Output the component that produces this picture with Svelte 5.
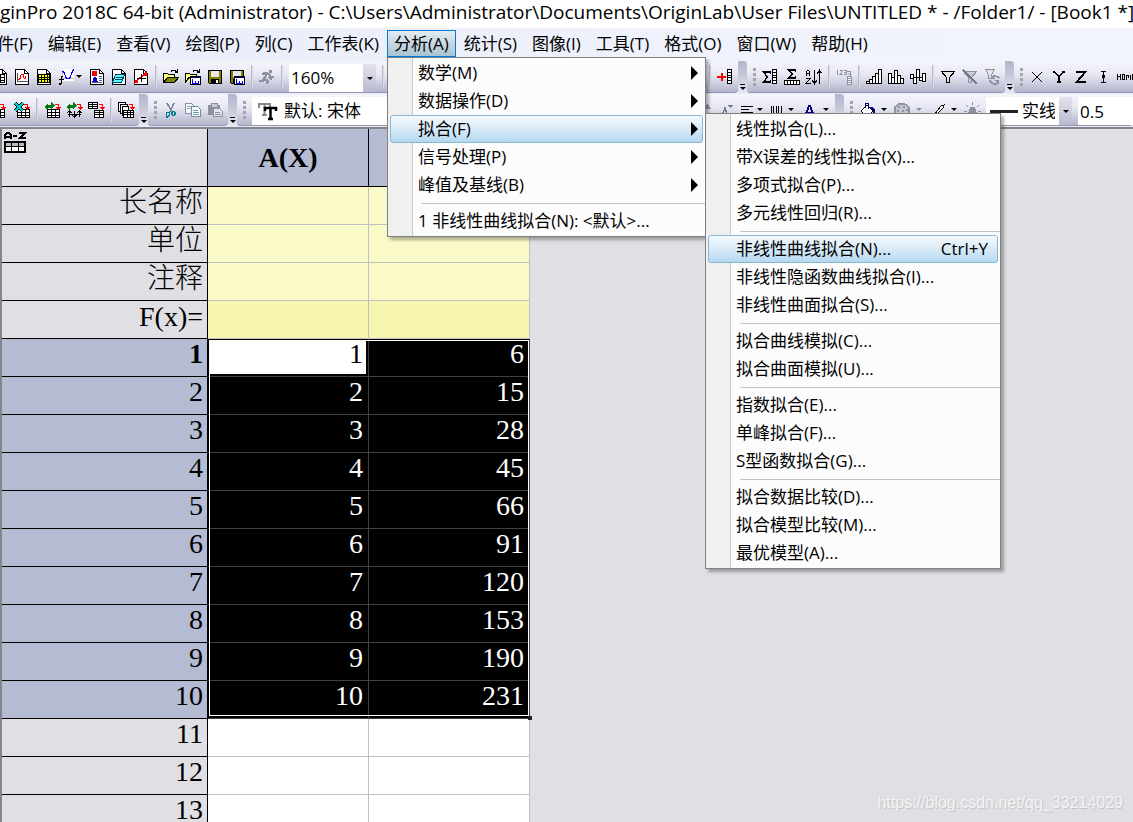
<script>
  const menus = ['件(F)', '编辑(E)', '查看(V)', '绘图(P)', '列(C)', '工作表(K)', '分析(A)', '统计(S)', '图像(I)', '工具(T)', '格式(O)', '窗口(W)', '帮助(H)'];

  const analysis = [
    { t: '数学(M)', sub: true },
    { t: '数据操作(D)', sub: true },
    { t: '拟合(F)', sub: true, on: true },
    { t: '信号处理(P)', sub: true },
    { t: '峰值及基线(B)', sub: true },
    null,
    { t: '1 非线性曲线拟合(N): <默认>...' }
  ];
  const fitting = [
    { t: '线性拟合(L)...' },
    { t: '带X误差的线性拟合(X)...' },
    { t: '多项式拟合(P)...' },
    { t: '多元线性回归(R)...' },
    null,
    { t: '非线性曲线拟合(N)...', key: 'Ctrl+Y', on: true },
    { t: '非线性隐函数曲线拟合(I)...' },
    { t: '非线性曲面拟合(S)...' },
    null,
    { t: '拟合曲线模拟(C)...' },
    { t: '拟合曲面模拟(U)...' },
    null,
    { t: '指数拟合(E)...' },
    { t: '单峰拟合(F)...' },
    { t: 'S型函数拟合(G)...' },
    null,
    { t: '拟合数据比较(D)...' },
    { t: '拟合模型比较(M)...' },
    { t: '最优模型(A)...' }
  ];

  const labels = ['长名称', '单位', '注释', 'F(x)='];
  const data = [6, 15, 28, 45, 66, 91, 120, 153, 190, 231];
  const empty = [11, 12, 13];

  const K = 'fill="none" stroke="#000"';
  const doc = '<path d="M1.5 .5h9l4 4v11h-13z" fill="#fff" stroke="#000"/><path d="M10.5 .5v4h4" fill="none" stroke="#000"/>';
  // small table: outline, one header line, one body line and two column lines
  const grid = (x, y) => `<path d="M${x}.5 ${y}.5h12v8h-12z" fill="#fff" stroke="#000"/><path d="M${x} ${y + 3}.5h12M${x} ${y + 6}.5h12M${x + 4}.5 ${y}v8M${x + 8}.5 ${y}v8" ${K}/>`;
  const redArrow = (x, y) => `<path d="M${x} ${y}.5h3.5v4" fill="none" stroke="#f00" stroke-width="1.4"/><path d="M${x + 1} ${y + 3}h5l-2.500 3.500z" fill="#f00"/>`;
  const green = '<path d="M0 5l4-4v2h3v3h-3v2zM11 3l-4 4v-2h-2v-2h2v-3z" fill="#007a10"/>';
  const folder = '<path d="M.5 13.5v-9h4l1 1h6v3" fill="#ffff80" stroke="#000"/>';
  const curl = `<path d="M8 2.500q3-3 6 1M14.500 0v3.500h-3" ${K}/>`;
  const win = '<path d="M5.500 7.500h10v8h-10z" fill="#fff" stroke="#000"/><path d="M6 8h9v1h-9z" fill="#000080"/><path d="M7.500 10v4h6v-2M10.500 12v2" fill="none" stroke="#00f"/>';
  const floppy = '<path d="M1.500 1.500h13v13h-12l-1-1z" fill="#808000" stroke="#000"/><path d="M4 2h8v6h-8z" fill="#e8e8e8"/><path d="M4 10h8v5h-8z" fill="#000"/><path d="M9 11h2v3h-2z" fill="#fff"/>';
  const column = '<path d="M10.500 .5h4v14h-4z" fill="#fff" stroke="#000"/><path d="M10 3.500h4M10 6.500h4M10 8.500h4M10 11.500h4" fill="none" stroke="#000"/>';
  const funnel = (c, f) => `<path d="M1.500 2.500h13l-5 6v5h-3v-5z" fill="${f}" stroke="${c}" stroke-width="1.200"/>`;

  const icons = {
    book: `<path d="M5 .5h5.500l4 4v11h-10" fill="#fff" stroke="#000"/><path d="M10.500 .5v4h4" ${K}/><path d="M0 5.500h12.500v8h-12.500" fill="#fff" stroke="#000"/><path d="M0 8.500h12M0 11.500h12M8.500 6v8" ${K}/>`,
    graph: doc + '<path d="M3.500 4v8.500h10" fill="none" stroke="#555"/><path d="M4 11l2-1 1-4 2-1 1 4 1 1 1-3" fill="none" stroke="#f00" stroke-width="1.200"/>',
    matrix: doc + '<path d="M2.500 5.500h11v8h-11z" fill="#ff0" stroke="#000"/><path d="M2 8.500h12M2 10.500h12M5.500 5v9M8.500 5v9M11.500 5v9" fill="none" stroke="#000"/>',
    func: '<path d="M4 0h12v12h-12z" fill="#fff"/><path d="M4.500 1v10M4 9.500h12" stroke="#bbb"/><path d="M4 2q2 0 3 4t3 4 3-4 3-6" fill="none" stroke="#00f" stroke-width="1.200"/><path d="M5 7.500h-1.500v6l-1 1.500h-2M1 10.500h5" fill="none" stroke="#000" stroke-width="1.600"/>',
    layout: doc + '<path d="M3 2h5v5h-5z" fill="#f00"/><path d="M3 13l2-5h2l2 5z" fill="#00c"/><path d="M10 7.500h3M10 9.500h3M10 11.500h3M3 13.500h10" stroke="#558"/>',
    notes: doc + '<path d="M4.500 5.500h9l-3 8h-9z" fill="#5ff" stroke="#046"/><path d="M5 8.500h7M4 10.500h7" stroke="#046"/>',
    digit: doc + '<path d="M1 14l6-5 7-6" stroke="#f00" stroke-width="1.500"/><path d="M8.500 5v8M4 9.500h9" stroke="#000"/><path d="M2 11h3v3h-3zM11 4h3v3h-3z" fill="#f00"/>',
    open: folder + '<path d="M.5 13.500l4-5h11l-4 5z" fill="#808000" stroke="#000"/>' + curl,
    open2: folder + '<path d="M1 13l3-5h4" fill="#808000" stroke="#000"/>' + win + curl,
    save: floppy,
    saveAs: floppy + win,
    run: '<path d="M10 1h3v3h-3z" fill="#8f91a0"/><path d="M3 5l4-1 3 1 2 3h3M8 5l-3 5 4 2-1 3M6 10l-2 2h-4M10 8l3 3" fill="none" stroke="#8f91a0" stroke-width="2.400"/>',
    addCol: '<path d="M0 8h9M4.500 4v8" stroke="#f00" stroke-width="2"/>' + column,
    stat: '<path d="M8.500 5v-2h-7l4 5-4 5h7v-2" fill="none" stroke="#000" stroke-width="1.400"/>' + column,
    statRow: '<path d="M11.500 3v-2h-7l4 4-4 4h7v-2" fill="none" stroke="#000" stroke-width="1.400"/><path d="M.5 11.500h15v4h-15z" fill="#fff" stroke="#000"/><path d="M3.500 12v4M6.500 12v4M9.500 12v4M12.500 12v4" stroke="#000"/>',
    sort: `<path d="M.5 7v-4l1-2h1l1 2v4M1 4.500h3M0 9.500h4l-4 5h5" ${K}/><path d="M8.500 1v13M6 11.500l2.500 3 2-3M13.500 15v-13M11 4.500l2.500-3 2 3" ${K} stroke-width="1.300"/>`,
    rank: '<path d="M1.500 1v5M4 1.500h2.500l-2.500 4h3M8 1.500h2v4h-2M8 3.500h2M11 2.500h3v4M12 4l2 2" fill="none" stroke="#8f91a0"/><path d="M11.500 7.500h4v8h-4z" fill="#fff" stroke="#8f91a0"/><path d="M11 9.500h4M11 11.500h4M11 13.500h4" stroke="#8f91a0"/>',
    bars1: '<path d="M.5 12.500h3v2h-3zM3.500 10.500h3v4h-3zM6.500 7.500h3v7h-3zM9.500 4.500h3v10h-3zM12.500 .5h3v14h-3z" fill="#fff" stroke="#000"/>',
    bars2: '<path d="M.5 4.500h3v10h-3zM3.500 8.500h3v6h-3zM6.500 1.500h3v13h-3zM9.500 6.500h3v8h-3zM12.500 9.500h3v5h-3z" fill="#fff" stroke="#000"/>',
    bars3: '<path d="M.5 5.500h3v4h-3zM3.500 8.500h3v6h-3zM6.500 .5h3v8h-3zM9.500 8.500h3v3h-3zM12.500 4.500h3v8h-3z" fill="#fff" stroke="#000"/>',
    filter: funnel('#000', '#e4e4e4'),
    filterOff: funnel('#8f91a0', '#ccd') + '<path d="M1 1l14 14" stroke="#777a8c" stroke-width="2"/>',
    filterRe: '<path d="M1.500 .5h9l-3 5v4h-3v-4z" fill="#e4e4ee" stroke="#8f91a0"/><path d="M15 9a5 4 0 0 0-7-1M6 11a5 4 0 0 0 8 3" fill="none" stroke="#8f91a0" stroke-width="2"/><path d="M7 5v5h4zM15 16v-5h-5z" fill="#8f91a0"/>',
    x: '<path d="M3 3l10 10M13 3l-10 10" stroke="#000" stroke-width="1.400"/>',
    y: '<path d="M2 3h2l4 5v5M14 3h-2l-4 5M6 13h4" fill="none" stroke="#000" stroke-width="1.400"/>',
    z: '<path d="M3 3h9.500l-9 10h9.500" fill="none" stroke="#000" stroke-width="1.800"/>',
    err: '<path d="M6 2.500h5M8.500 2v11M6 13.500h5" stroke="#000"/><path d="M7 6h3v3h-3z" fill="#000"/>',
    home: '<path d="M.5 11v-6M.5 7.500h2M3.500 11v-6M5.500 5.500h2v5h-2zM9.500 11v-5.500M10 6.500h2M11.500 6v3M13.500 11v-5.500M17 5.500h-1.500v5h2M15 8h2" fill="none" stroke="#000"/>',
    impA: grid(0, 7) + redArrow(8, 2),
    excel: grid(3, 7) + '<path d="M1 1l8 8M9 1l-8 8" stroke="#000" stroke-width="3"/><path d="M1 1l8 8M9 1l-8 8" stroke="#0cc" stroke-width="1.500"/>' + redArrow(10, 2),
    recalc: green + grid(3, 7) + redArrow(11, 2),
    recalc2: green + `<path d="M3.500 9v6M1 11l2.500-2 2 2M8.500 9v6M6 13l2.500 2 2-2M13.500 9v6M11 11l2.500-2 2 2M2 12.500h13" ${K}/>` + redArrow(11, 2),
    copyTab: '<path d="M.5 .5h9v6h-9z" fill="#fff" stroke="#000"/><path d="M0 2.500h9M0 4.500h9M4.500 1v6" stroke="#000"/><path d="M6.500 8.500h9v7h-9z" fill="#fff" stroke="#000"/><path d="M7 10.500h9M7 12.500h9M11.500 9v7" stroke="#000"/>' + redArrow(11, 2),
    batch: '<path d="M.5 .5h7v9h-7z" fill="#fff" stroke="#000"/><path d="M2.500 2.500h7v9h-7z" fill="#fff" stroke="#000"/><path d="M4.500 4.500h6v9h-6z" fill="#fff" stroke="#000"/><path d="M5.500 8.500h10v7h-10z" fill="#fff" stroke="#000"/><path d="M6 10.500h10M6 12.500h10M9.500 9v7M12.500 9v7" stroke="#000"/>' + redArrow(11, 2),
    cut: '<path d="M4 1l5 9M11 1l-4 9" stroke="#789" stroke-width="1.600"/><path d="M3.500 10.500h3v3l-2 1.500h-1zM9.500 9.500h2l1 3-2 1-2-1z" fill="none" stroke="#067a90" stroke-width="1.400"/>',
    copy: '<path d="M.5 1.500h6l3 3v7h-9z" fill="#f6f6fa" stroke="#8f91a0"/><path d="M2 4.500h4M2 6.500h5" stroke="#9aa"/><path d="M6.500 4.500h6l3 3v7h-9z" fill="#fff" stroke="#68909a"/><path d="M8 8.500h5M8 10.500h6M8 12.500h6" stroke="#68a0a8"/>',
    paste: '<path d="M1 3h12v10h-12z" fill="#8f91a0"/><path d="M4 1h6v4h-6z" fill="#c8cad6" stroke="#8f91a0"/><path d="M6.500 6.500h6l3 3v5h-9z" fill="#e4e4ee" stroke="#8f91a0"/><path d="M8 10.500h5M8 12.500h6" stroke="#8f91a0"/>',
    fontUp: '<path d="M1 14l4-9 4 9M3 11h5M10 6l2.500-3 2.500 3z" fill="#8f91a0" stroke="#8f91a0"/>',
    fontDn: '<path d="M4 15l4-9 3 9M5 11.500h5" fill="none" stroke="#777a8c" stroke-width="1.400"/><path d="M10 3h6l-3 3z" fill="#777a8c"/>',
    align: '<path d="M2 4.500h12M2 7.500h8M2 10.500h12M2 13.500h8" stroke="#000" stroke-width="1.300"/>',
    vbars: '<path d="M1.500 4v9M3.500 4v7M6.500 4v9M8.500 4v7M11.500 4v9" stroke="#000"/>',
    fontA: '<path d="M4 14l4-10h1l4 10M6 10.500h6M2 14h4M11 14h4" fill="none" stroke="#000080" stroke-width="2"/>',
    bucket: '<path d="M2 9l6-6 6 6-6 6z" fill="#fff" stroke="#000"/><path d="M6 6v-5h3v6" fill="none" stroke="#000080"/><path d="M10 5h4l2 3v6h-2v-5z" fill="#000080"/>',
    palette: '<path d="M1 5l4-3h6l4 3v6l-4 3h-6l-4-3z" fill="#c4c6d2" stroke="#8f91a0" stroke-width="1.400"/><path d="M4 4h2v2h-2zM9 4h2v2h-2zM3 8h2v2h-2zM8 8h2v2h-2zM12 7h2v2h-2z" fill="#8f91a0"/>',
    pen: '<path d="M5 13l7-9 3-1-1 3-7 7z" fill="#fff" stroke="#000"/><path d="M0 14h4" stroke="#000" stroke-width="1.500"/>',
    lamp: '<path d="M6 5h5l2 7v3h-9v-3z" fill="#8f91a0"/><path d="M8.500 0v3M2 3l2 2M15 3l-2 2M0 9h3M14 9h3" stroke="#8f91a0"/>'
  };
</script>

{#snippet icon(n)}
  <button class="ic" aria-label={n}><svg width="16" height="16" viewBox="0 0 16 16" shape-rendering="crispEdges">{@html icons[n]}</svg></button>
{/snippet}
{#snippet drop(n, wide, dim)}
  <button class="ic drop" class:wide class:dim aria-label={n}><svg width="16" height="16" viewBox="0 0 16 16" shape-rendering="crispEdges">{@html icons[n]}</svg><i class="tri"></i></button>
{/snippet}
{#snippet popup(items)}
  {#each items as it}
    {#if it}
      <button class="item" class:on={it.on} role="menuitem"><span>{it.t}</span>{#if it.key}<kbd>{it.key}</kbd>{/if}{#if it.sub}<i class="more"></i>{/if}</button>
    {:else}
      <div class="rule"></div>
    {/if}
  {/each}
{/snippet}

<div class="app">
  <header class="title">ginPro 2018C 64-bit (Administrator) - C:\Users\Administrator\Documents\OriginLab\User Files\UNTITLED * - /Folder1/ - [Book1 *]</header>

  <nav class="menubar">
    {#each menus as m}
      <button class:open={m === '分析(A)'}>{m}</button>
    {/each}
  </nav>

  <div class="row">
    <div class="bar first">
      {@render icon('book')}{@render icon('graph')}{@render icon('matrix')}{@render drop('func')}
      {@render icon('layout')}{@render icon('notes')}{@render icon('digit')}
      <i class="sep"></i>
      {@render icon('open')}{@render icon('open2')}{@render icon('save')}{@render icon('saveAs')}
      <i class="sep"></i>
      {@render icon('run')}
      <i class="sep"></i>
      <div class="combo zoom"><select aria-label="zoom"><option>160%</option></select><i class="btn"><i class="tri"></i></i></div>
      <i class="sep"></i>
      <i class="fill one"></i>
      <i class="sep"></i>
      {@render icon('addCol')}
    </div>
    <i class="cap"></i>
    <div class="bar">
      <i class="grip"></i>
      {@render icon('stat')}{@render icon('statRow')}{@render icon('sort')}
      <i class="sep"></i>
      {@render icon('rank')}
      <i class="sep"></i>
      {@render icon('bars1')}{@render icon('bars2')}{@render icon('bars3')}
      <i class="sep"></i>
      {@render icon('filter')}{@render icon('filterOff')}{@render icon('filterRe')}
    </div>
    <i class="cap"></i>
    <div class="bar last">
      <i class="grip"></i>
      {@render icon('x')}{@render icon('y')}{@render icon('z')}{@render icon('err')}{@render icon('home')}
    </div>
  </div>

  <div class="row">
    <div class="bar first">
      {@render icon('impA')}{@render icon('excel')}
      <i class="sep"></i>
      {@render icon('recalc')}{@render icon('recalc2')}{@render icon('copyTab')}
      <i class="sep"></i>
      {@render icon('batch')}
    </div>
    <i class="cap"></i>
    <div class="bar">
      <i class="grip"></i>
      {@render icon('cut')}{@render icon('copy')}{@render icon('paste')}
    </div>
    <i class="cap"></i>
    <div class="bar">
      <i class="grip"></i>
      <div class="combo font">
        <svg width="20" height="20" viewBox="0 0 20 20"><path d="M1 7V3h11v4M6.500 3v11M4 14h5" fill="none" stroke="#888" stroke-width="2"/><path d="M7 10V7h11v3M12.500 7v11M10 18h5" fill="none" stroke="#000" stroke-width="2.500"/></svg>
        <select aria-label="font"><option>默认: 宋体</option></select>
      </div>
      <i class="fill two"></i>
      {@render icon('fontUp')}{@render icon('fontDn')}{@render drop('align')}{@render drop('vbars')}{@render drop('fontA', true)}
    </div>
    <i class="cap"></i>
    <div class="bar last">
      <i class="grip"></i>
      {@render drop('bucket', true)}{@render drop('palette', true, true)}{@render drop('pen', true)}{@render icon('lamp')}
      <div class="combo line"><i class="stroke"></i><select aria-label="line"><option>实线</option></select><i class="btn"><i class="tri"></i></i></div>
      <input class="width" aria-label="width" value="0.5" />
    </div>
  </div>

  <main class="sheet">
    <div class="grid">
      <table>
        <colgroup><col class="head" /><col /><col /></colgroup>
        <thead>
          <tr>
            <th class="corner"><svg width="23" height="23" viewBox="0 0 23 23" shape-rendering="crispEdges"><path d="M1 8V4l2-2h2l2 2v4M1 5.500h6M9 5h4M15 2h6l-5 5h6" fill="none" stroke="#000" stroke-width="2"/><path d="M1 11h20v10H1z" fill="#fff" stroke="#000" stroke-width="2"/><path d="M2 12h18v3H2z" fill="#b8bcb8"/><path d="M1 15.500h20M7.500 11v10M14.500 11v10" stroke="#000" stroke-width="1.500"/></svg></th>
            <th class="col">A(X)</th>
            <th class="col"></th>
          </tr>
        </thead>
        <tbody>
          {#each labels as l, i}
            <tr class="meta" class:fx={i === 3}><th>{l}</th><td></td><td></td></tr>
          {/each}
          {#each data as d, i}
            <tr class="sel"><th class:strong={i === 0}>{i + 1}</th><td class:active={i === 0}>{i + 1}</td><td>{d}</td></tr>
          {/each}
          {#each empty as n}
            <tr><th>{n}</th><td></td><td></td></tr>
          {/each}
        </tbody>
      </table>
      <div class="frame"></div>
      <div class="handle"></div>
    </div>
    <div class="mark">https://blog.csdn.net/qq_33214029</div>
  </main>

  <div class="menu m1" role="menu">{@render popup(analysis)}</div>
  <div class="menu m2" role="menu">{@render popup(fitting)}</div>
</div>

<style>
  .app, .app :global(*) { box-sizing: border-box; }
  .app {
    position: relative;
    display: flex;
    flex-direction: column;
    height: 100vh;
    overflow: hidden;
    background: #e8e9f6;
    color: #000;
    font: 17px/24px "Open Sans", "Noto Sans CJK SC", sans-serif;
  }
  button, select, input { font: inherit; color: inherit; border: 0; background: none; padding: 0; margin: 0; }
  i { display: block; flex: none; }

  .title { height: 28px; line-height: 24px; font-size: 19px; background: #fff; white-space: nowrap; overflow: hidden; flex: none; }
  .menubar { display: flex; gap: 1px; height: 33px; padding-top: 2px; background: linear-gradient(90deg, #e9edfa, #f3f5fd); flex: none; overflow: hidden; }
  .menubar button { flex: none; height: 27px; padding: 0 7px; white-space: nowrap; }
  .menubar button:first-child { padding-left: 0; margin-left: -3px; }
  .menubar .open { background: linear-gradient(#e4ecf2, #a8c3d2); border: 1px solid #0078d7; padding: 0 6px; }

  .row { display: flex; flex: none; height: 33px; padding-bottom: 1px; overflow: hidden; }
  .bar {
    display: flex;
    flex: none;
    align-items: center;
    gap: 6px;
    padding: 0 5px 0 6px;
    background: linear-gradient(#f5f6fc, #e6e7f2 45%, #b4b4cb);
    border-bottom: 1px solid #9695b2;
    border-radius: 0 0 4px 3px;
  }
  .bar.first { padding-left: 0; margin-left: -8px; }
  .bar.last { flex: 1 0 auto; }
  .ic { display: flex; flex: none; align-items: center; width: 16px; height: 24px; }
  .ic svg { flex: none; overflow: visible; }
  .drop { width: 25px; gap: 1px; }
  .drop.wide { width: 29px; gap: 5px; }
  .tri { width: 0; height: 0; border: 4px solid transparent; border-top-color: #000; border-bottom: 0; }
  .drop .tri { border-width: 3px 3px 0; margin-left: 1px; }
  .dim .tri { border-top-color: #8f91a0; }
  .sep { width: 2px; height: 24px; border-left: 1px solid #b9b9c9; border-right: 1px solid #dcdce6; }
  .grip { width: 3px; height: 18px; background: repeating-linear-gradient(#a2a2ae 0 3px, transparent 3px 5px); }
  .cap { position: relative; width: 9px; height: 32px; background: linear-gradient(#b2b2cc, #cfcfe0 60%, #e8e9f6); border-radius: 0 4px 0 0; }
  .cap::before { content: ""; position: absolute; left: 2px; top: 23px; width: 5px; height: 1px; background: #000; }
  .cap::after { content: ""; position: absolute; left: 2px; top: 26px; border: 3px solid transparent; border-top-color: #000; border-bottom: 0; }
  .fill.one { width: 313px; }
  .fill.two { width: 231px; }

  .combo { display: flex; align-items: center; align-self: flex-end; flex: none; height: 28px; background: #fff; }
  .combo select { appearance: none; flex: 1; min-width: 0; outline: 0; }
  .combo .btn { display: flex; align-items: center; justify-content: center; width: 13px; height: 28px; background: linear-gradient(#e3e3ee, #b9b9cf); }
  .combo .btn .tri { border-width: 3px 3px 0; }
  .zoom { width: 87px; padding-left: 2px; }
  .font { width: 200px; padding-left: 6px; gap: 6px; }
  .line { width: 86px; padding-left: 4px; gap: 4px; }
  .stroke { width: 28px; height: 3px; background: #222; }
  .width { flex: 1; align-self: flex-end; width: 50px; height: 28px; background: #fff; padding-left: 2px; margin-right: -5px; }

  .sheet { position: relative; flex: 1; min-height: 0; overflow: hidden; background: #e0dfe4; border-top: 2px solid #84848c; border-left: 2px solid #84848c; }
  .grid { position: relative; width: max-content; }
  table { width: 528px; table-layout: fixed; border-spacing: 0; font: 28px/29px "Liberation Serif", "Noto Sans CJK SC", serif; }
  .head { width: 206px; }
  th, td { height: 38px; padding: 0 5px 0 0; text-align: right; vertical-align: top; border: 0 solid #c0c0c0; border-width: 0 1px 1px 0; }
  td { background: #fff; }
  th { font-weight: 300; border-color: #000; background: #e0dfe4; padding-right: 4px; }
  thead th { height: 58px; }
  .corner { text-align: left; padding: 2px; line-height: 0; }
  .col { background: #b5bbd3; font-weight: 700; text-align: center; vertical-align: middle; padding: 0; }
  .meta th { line-height: 31px; }
  .meta td { background: #fafac8; }
  .fx td { background: #f6f6b0; }
  .sel th { background: #b5bbd3; }
  .sel .strong { font-weight: 700; }
  .sel td { background: #000; color: #fff; border-color: #404040; }
  .sel td.active { background: #fff; color: #000; box-shadow: inset 1px 1px #000, inset -2px -2px #000; }
  .frame { position: absolute; left: 207px; right: 1px; top: 211px; height: 376px; border: 1px solid #fff; }
  .handle { position: absolute; right: -2px; top: 587px; width: 4px; height: 4px; background: #222; }
  .mark { position: absolute; right: 10px; bottom: 7px; font: 16px/24px "Liberation Sans", sans-serif; color: #f4f4f6; text-shadow: 1px 1px 1px #c0c0c4; }

  .menu {
    position: absolute;
    padding: 1px 0;
    border: 1px solid #808080;
    background: linear-gradient(90deg, #f0f0f0 24px, #c8c8c8 24px 25px, #fcfcfc 25px);
    box-shadow: 3px 3px 3px rgba(0, 0, 0, 0.3);
  }
  .m1 { left: 387px; top: 57px; width: 319px; }
  .m2 { left: 705px; top: 113px; width: 296px; }
  .item { display: flex; align-items: center; width: calc(100% - 4px); height: 28px; margin-left: 2px; padding: 0 9px 0 27px; border: 1px solid transparent; border-radius: 3px; white-space: nowrap; }
  .m1 .item { padding-right: 4px; }
  .item.on { background: linear-gradient(#f4f9fd, #dcecf8 45%, #b5d8f2); border-color: #8ab6d4; }
  kbd { margin-left: auto; font: inherit; }
  .more { margin-left: auto; border: 7px solid transparent; border-left-color: #000; border-right: 0; }
  .rule { height: 8px; margin-left: 34px; background: linear-gradient(transparent 4px, #c4c4c4 4px 5px, transparent 5px); }
</style>
